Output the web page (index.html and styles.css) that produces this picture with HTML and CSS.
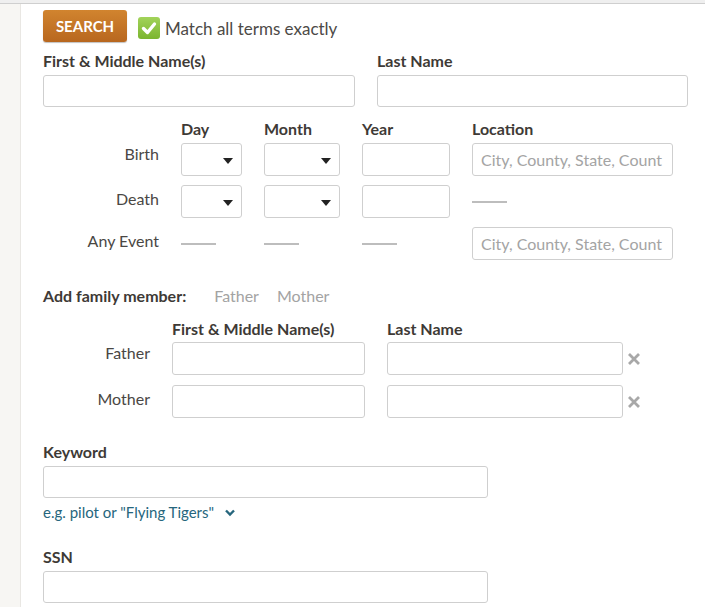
FILE: index.html
```html
<!DOCTYPE html>
<html>
<head>
<meta charset="utf-8">
<link rel="stylesheet" href="styles.css">
</head>
<body>
<div class="page">
  <div class="gutter"></div>
  <div class="main">
    <div class="actions">
      <button class="search-btn">SEARCH</button>
      <label class="exact">
        <span class="checkbox"><svg width="22" height="22" viewBox="0 0 22 22"><path d="M5.5 11.5 L9.5 15.5 L16.5 7" fill="none" stroke="#fff" stroke-width="3.4" stroke-linecap="round" stroke-linejoin="round"/></svg></span>
        <span>Match all terms exactly</span>
      </label>
    </div>

    <div class="names">
      <div class="field">
        <div class="label">First &amp; Middle Name(s)</div>
        <div class="input"></div>
      </div>
      <div class="field">
        <div class="label">Last Name</div>
        <div class="input"></div>
      </div>
    </div>

    <div class="events">
      <div></div>
      <div class="label">Day</div>
      <div class="label">Month</div>
      <div class="label">Year</div>
      <div class="label">Location</div>

      <div class="rowlabel">Birth</div>
      <div class="input select"><span class="caret"></span></div>
      <div class="input select"><span class="caret"></span></div>
      <div class="input"></div>
      <div class="input placeholder">City, County, State, Count</div>

      <div class="rowlabel lower">Death</div>
      <div class="input select"><span class="caret"></span></div>
      <div class="input select"><span class="caret"></span></div>
      <div class="input"></div>
      <div class="dash-cell"><span class="dash"></span></div>

      <div class="rowlabel lower">Any Event</div>
      <div class="dash-cell"><span class="dash"></span></div>
      <div class="dash-cell"><span class="dash"></span></div>
      <div class="dash-cell"><span class="dash"></span></div>
      <div class="input placeholder">City, County, State, Count</div>
    </div>

    <div class="add-family">
      <span class="label">Add family member:</span>
      <span class="fam-link">Father</span>
      <span class="fam-link">Mother</span>
    </div>

    <div class="family">
      <div></div>
      <div class="label">First &amp; Middle Name(s)</div>
      <div class="label">Last Name</div>
      <div></div>

      <div class="rowlabel">Father</div>
      <div class="input"></div>
      <div class="input"></div>
      <div class="remove"><svg width="14" height="14" viewBox="0 0 14 14"><path d="M2 2 L12 12 M12 2 L2 12" stroke="#a8a8a8" stroke-width="2.8" stroke-linecap="butt"/></svg></div>

      <div class="rowlabel lower">Mother</div>
      <div class="input"></div>
      <div class="input"></div>
      <div class="remove"><svg width="14" height="14" viewBox="0 0 14 14"><path d="M2 2 L12 12 M12 2 L2 12" stroke="#a8a8a8" stroke-width="2.8" stroke-linecap="butt"/></svg></div>
    </div>

    <div class="field keyword">
      <div class="label">Keyword</div>
      <div class="input wide"></div>
      <div class="hint">e.g. pilot or "Flying Tigers" <svg class="chev" width="12" height="8" viewBox="0 0 12 8"><path d="M2 1.5 L6 5.5 L10 1.5" fill="none" stroke="#26667d" stroke-width="2.4"/></svg></div>
    </div>

    <div class="field ssn">
      <div class="label">SSN</div>
      <div class="input wide"></div>
    </div>
  </div>
</div>
</body>
</html>
```

FILE: styles.css
```css
html, body {
  margin: 0;
  padding: 0;
  background: #fff;
}
body {
  font-family: "Lato", "Open Sans", sans-serif;
  font-size: 16px;
  color: #4a4744;
  border-top: 3px solid #efefef;
}
.page {
  display: flex;
  min-height: 604px;
  border-top: 1px solid #cfcfcf;
}
.gutter {
  width: 20px;
  background: #f7f6f3;
  border-right: 1px solid #e9e7e3;
  flex: none;
}
.main {
  flex: 1;
  padding: 6px 17px 0 22px;
}
.actions {
  display: flex;
  align-items: center;
  gap: 11px;
  height: 32px;
}
.search-btn {
  width: 84px;
  height: 32px;
  border: none;
  border-radius: 3px;
  background: linear-gradient(#d1842f, #b8671f);
  color: #fff;
  font-family: inherit;
  font-weight: bold;
  font-size: 15px;
  padding: 0;
  box-shadow: 0 1px 1px rgba(0,0,0,0.25);
}
.exact {
  display: flex;
  align-items: center;
  gap: 5px;
  font-size: 17px;
  color: #4d4a47;
  margin-top: 4px;
}
.checkbox {
  width: 22px;
  height: 22px;
  border-radius: 3px;
  background: linear-gradient(#a2d35a, #7bb52f);
  display: block;
}
.checkbox svg { display: block; }
.label {
  font-weight: bold;
  color: #3e3a36;
  line-height: 22px;
}
.input {
  height: 32px;
  box-sizing: border-box;
  border: 1px solid #cfcfcf;
  border-radius: 3px;
  background: #fff;
}
.names {
  display: grid;
  grid-template-columns: 312px 311px;
  column-gap: 22px;
  margin-top: 8px;
}
.names .label { margin-bottom: 3px; }

.events {
  display: grid;
  grid-template-columns: 116px 61px 76px 88px 201px;
  column-gap: 22px;
  grid-template-rows: 25px 42px 42px 33px;
  align-items: start;
  margin-top: 11px;
}
.events .input { height: 33px; }
.rowlabel {
  text-align: right;
  line-height: 22px;
  color: #4a4744;
}
.rowlabel.lower { padding-top: 3px; }
.select {
  position: relative;
}
.caret {
  position: absolute;
  right: 8px;
  top: 14px;
  width: 0;
  height: 0;
  border-left: 5px solid transparent;
  border-right: 5px solid transparent;
  border-top: 6px solid #222;
}
.placeholder {
  color: #a4a4a4;
  padding-left: 8px;
  line-height: 31px;
  white-space: nowrap;
  overflow: hidden;
}
.dash-cell {
  display: flex;
  align-items: center;
  height: 33px;
}
.dash {
  display: block;
  width: 35px;
  height: 2px;
  background: #bdbdbd;
}

.add-family {
  display: flex;
  align-items: center;
  gap: 18px;
  margin-top: 25px;
  line-height: 22px;
}
.add-family .label { margin-right: 10px; }
.add-family .fam-link {
  color: #a3a3a3;
}

.family {
  display: grid;
  grid-template-columns: 107px 193px 236px 20px;
  column-gap: 22px;
  grid-template-rows: 24px 43px 33px;
  align-items: start;
  margin-top: 11px;
}
.family .input { height: 33px; }
.family .remove {
  margin-left: -18px;
  height: 33px;
  display: flex;
  align-items: center;
  padding-top: 1px;
  box-sizing: border-box;
}

.keyword { margin-top: 23px; }
.keyword .label, .ssn .label { margin-bottom: 3px; }
.wide { width: 445px; }
.hint {
  color: #26667d;
  font-size: 15px;
  line-height: 20px;
  margin-top: 4px;
}
.chev {
  margin-left: 6px;
  vertical-align: 1px;
}
.ssn { margin-top: 24px; }
```
